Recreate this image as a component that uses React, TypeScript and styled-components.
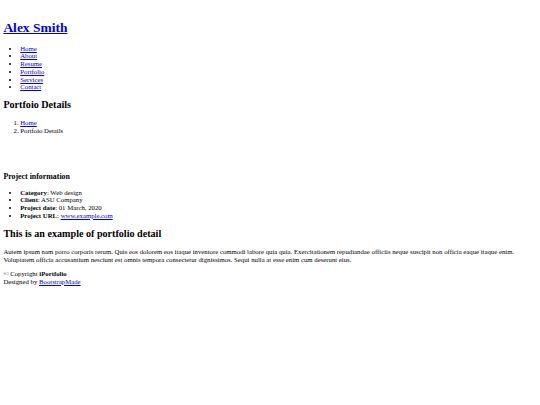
import React from "react";
import styled, { createGlobalStyle } from "styled-components";

const S = 540 / 1280;
const px = (n: number) => `${(n * S).toFixed(3)}px`;

const GlobalStyle = createGlobalStyle`
  html, body { background: #ffffff; }
  body {
    margin: ${px(8)};
    font-family: "Liberation Serif", "Times New Roman", serif;
    font-size: ${px(16)};
    line-height: 1.15;
    color: #000000;
  }
`;

const Header = styled.header`
  display: block;
  padding-top: ${px(18)};
`;

const Logo = styled.h1`
  font-size: ${px(32)};
  font-weight: bold;
  margin: ${px(21.44)} 0;
`;

const Link = styled.a`
  color: #0000ee;
  text-decoration: underline;
  cursor: pointer;
`;

const BulletList = styled.ul`
  margin: ${px(16)} 0;
  padding-left: ${px(40)};
  list-style: disc;
`;

const NumberList = styled.ol`
  margin: ${px(16)} 0;
  padding-left: ${px(40)};
  list-style: decimal;
`;

const Item = styled.li``;

const SectionTitle = styled.h2`
  font-size: ${px(24)};
  font-weight: bold;
  margin: ${px(19.92)} 0;
`;

const Gallery = styled.div<{ $h: number }>`
  height: ${(p) => px(p.$h)};
`;

const InfoTitle = styled.h3`
  font-size: ${px(18.72)};
  font-weight: bold;
  margin: ${px(18.72)} 0;
`;

const Text = styled.p`
  margin: ${px(16)} 0;
`;

const Footer = styled.footer`
  display: block;
`;

const Line = styled.div``;

const nav = ["Home", "About", "Resume", "Portfolio", "Services", "Contact"];

export default function App() {
  return (
    <>
      <GlobalStyle />
      <Header>
        <Logo>
          <Link href="#">Alex Smith</Link>
        </Logo>
        <nav>
          <BulletList>
            {nav.map((n) => (
              <Item key={n}>
                <Link href="#">{n}</Link>
              </Item>
            ))}
          </BulletList>
        </nav>
      </Header>
      <main>
        <section>
          <SectionTitle>Portfoio Details</SectionTitle>
          <NumberList>
            <Item>
              <Link href="#">Home</Link>
            </Item>
            <Item>Portfoio Details</Item>
          </NumberList>
        </section>
        <section>
          <Gallery $h={52} />
          <InfoTitle>Project information</InfoTitle>
          <BulletList>
            <Item>
              <strong>Category</strong>: Web design
            </Item>
            <Item>
              <strong>Client</strong>: ASU Company
            </Item>
            <Item>
              <strong>Project date</strong>: 01 March, 2020
            </Item>
            <Item>
              <strong>Project URL</strong>: <Link href="#">www.example.com</Link>
            </Item>
          </BulletList>
          <SectionTitle>This is an example of portfolio detail</SectionTitle>
          <Text>
            Autem ipsum nam porro corporis rerum. Quis eos dolorem eos itaque inventore commodi labore quia quia. Exercitationem repudiandae officiis neque suscipit non officia eaque itaque enim. Voluptatem officia accusantium nesciunt est omnis tempora consectetur dignissimos. Sequi nulla at esse enim cum deserunt eius.
          </Text>
        </section>
      </main>
      <Footer>
        <Line>
          © Copyright <strong>iPortfolio</strong>
        </Line>
        <Line>
          Designed by <Link href="#">BootstrapMade</Link>
        </Line>
      </Footer>
    </>
  );
}
